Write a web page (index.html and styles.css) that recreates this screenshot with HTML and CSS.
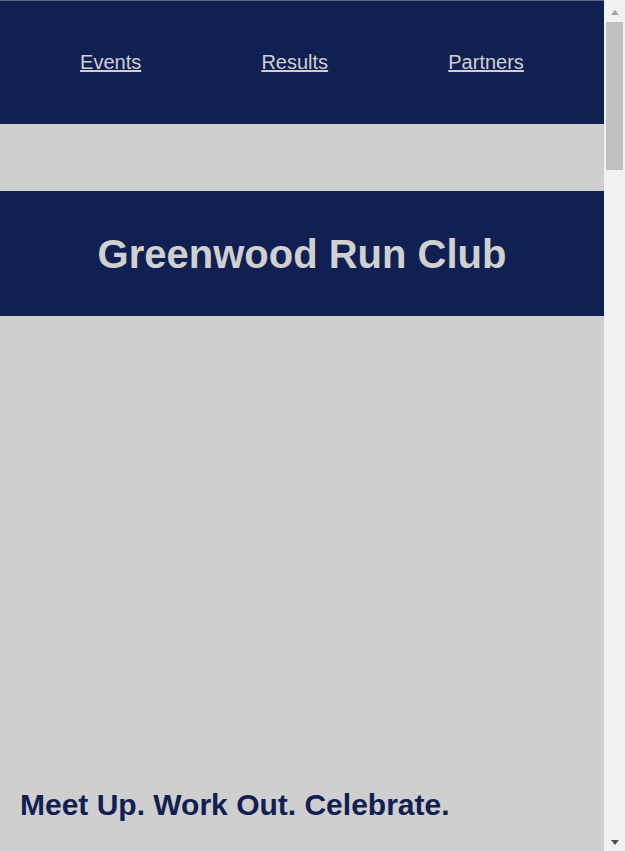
FILE: index.html
```html
<!DOCTYPE html>
<html lang="en">
<head>
<meta charset="utf-8">
<title>Greenwood Run Club</title>
<link rel="stylesheet" href="styles.css">
</head>
<body>
<div class="page">
  <nav class="nav">
    <a href="#events">Events</a>
    <a href="#results">Results</a>
    <a href="#partners">Partners</a>
  </nav>
  <header class="banner">
    <h1>Greenwood Run Club</h1>
  </header>
  <main class="main">
    <section class="hero"></section>
    <section class="intro">
      <h2>Meet Up. Work Out. Celebrate.</h2>
    </section>
  </main>
</div>
<div class="topline" aria-hidden="true"></div>
<div class="scrollbar" aria-hidden="true">
  <span class="arrow arrow-up"></span>
  <span class="thumb"></span>
  <span class="arrow arrow-down"></span>
</div>
</body>
</html>
```
FILE: styles.css
```css
html, body {
  margin: 0;
  padding: 0;
}
html {
  scrollbar-width: none;
}
body {
  background: #f1f1f1;
  font-family: "Liberation Sans", Arial, sans-serif;
  color: #112052;
}
.page {
  margin-right: 21px;
  background: #cfcfcf;
  min-height: 4730px;
}
.nav {
  background: #112052;
  display: flex;
  justify-content: space-around;
  align-items: center;
  height: 124px;
  padding: 0 20px;
  box-sizing: border-box;
}
.nav a {
  color: #d0d0d0;
  font-size: 20px;
  line-height: 23px;
  text-decoration: underline;
}
.banner {
  background: #112052;
  margin-top: 67px;
  height: 125px;
  display: flex;
  align-items: center;
  justify-content: center;
}
.banner h1 {
  margin: 0;
  font-size: 40px;
  line-height: 46px;
  font-weight: bold;
  color: #d0d0d0;
}
.hero {
  height: 451px;
}
.intro {
  padding: 20px;
}
.intro h2 {
  margin: 0;
  font-size: 30px;
  line-height: 35px;
  font-weight: bold;
  color: #112052;
}
.topline {
  position: fixed;
  top: 0;
  left: 0;
  right: 0;
  height: 1px;
  background: #5b6672;
}
.scrollbar {
  position: fixed;
  top: 0;
  right: 0;
  bottom: 0;
  width: 21px;
  background: #f1f1f1;
  display: flex;
  flex-direction: column;
  align-items: center;
}
.arrow {
  width: 0;
  height: 0;
  border-left: 4.5px solid transparent;
  border-right: 4.5px solid transparent;
}
.arrow-up {
  margin-top: 10px;
  border-bottom: 5px solid #a3a3a3;
}
.thumb {
  margin-top: 7px;
  width: 17px;
  height: 148px;
  background: #c1c1c1;
}
.arrow-down {
  margin-top: auto;
  margin-bottom: 6px;
  border-top: 5px solid #505050;
}
```
